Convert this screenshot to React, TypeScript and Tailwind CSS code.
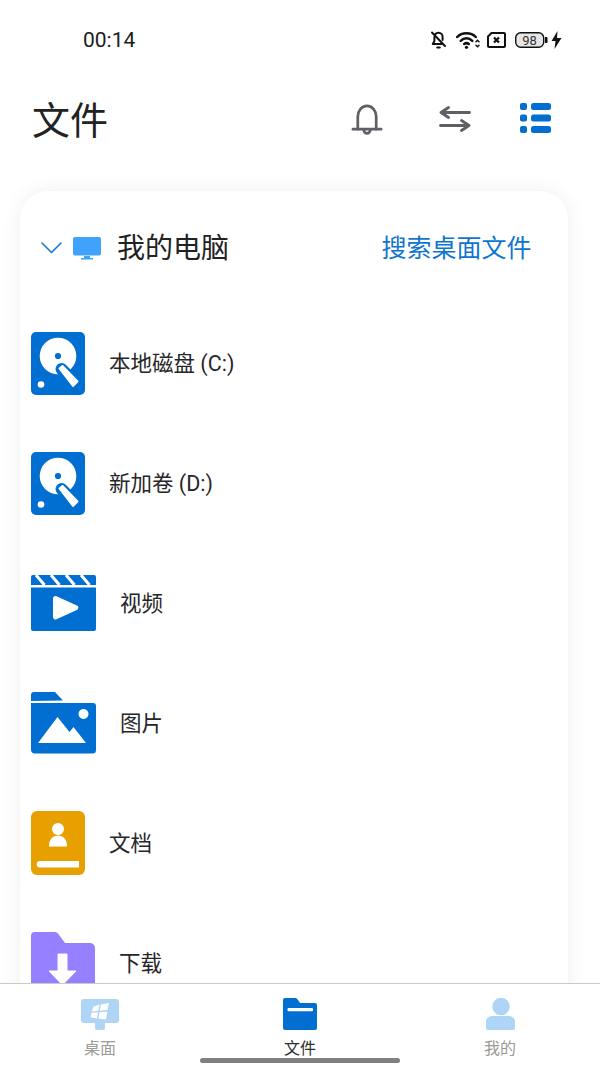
const BLUE = "#006fd1";

function DiskIcon() {
  return (
    <svg width="54" height="63" viewBox="0 0 54 63" className="shrink-0">
      <rect width="54" height="63" rx="5" fill={BLUE} />
      <circle cx="27" cy="24" r="18.300" fill="#fff" />
      <circle cx="27" cy="24" r="3.100" fill={BLUE} />
      <path d="M30.500 37L46 53" stroke={BLUE} strokeWidth="12" strokeLinecap="round" />
      <path d="M28.500 36.500L31.500 34L46.500 49.500L42 54Z" fill="#fff" stroke="#fff" strokeWidth="2" strokeLinejoin="round" />
      <circle cx="10" cy="52.500" r="3.300" fill="#fff" />
    </svg>
  );
}

function VideoIcon() {
  return (
    <svg width="65" height="56" viewBox="0 0 65 56" className="shrink-0">
      <path d="M2 0H63a2 2 0 0 1 2 2V10H0V2a2 2 0 0 1 2-2Z" fill={BLUE} />
      <path d="M5 0l8.500 10M20 0l8.500 10M35 0l8.500 10M50 0l8.500 10" stroke="#fff" strokeWidth="3" />
      <path d="M0 12.500H65V54a2 2 0 0 1-2 2H2a2 2 0 0 1-2-2Z" fill={BLUE} />
      <path d="M24.500 23.500L44.800 32.700L24.500 42Z" fill="#fff" stroke="#fff" strokeWidth="5" strokeLinejoin="round" />
    </svg>
  );
}

function ImageIcon() {
  return (
    <svg width="65" height="62" viewBox="0 0 65 62" className="shrink-0">
      <path d="M0 9V3a3 3 0 0 1 3-3H24l8 8.500Z" fill={BLUE} />
      <path d="M0 11H62a3 3 0 0 1 3 3V58a3.500 3.500 0 0 1-3.500 3.500H4A4 4 0 0 1 0 57.500Z" fill={BLUE} />
      <circle cx="52.500" cy="22" r="5" fill="#fff" />
      <path d="M7 51 L26.500 25 L38.500 40 L42.500 35 L55 51Z" fill="#fff" />
    </svg>
  );
}

function DocIcon() {
  return (
    <svg width="54" height="64" viewBox="0 0 54 64" className="shrink-0">
      <rect width="54" height="64" rx="6" fill="#e8a000" />
      <circle cx="27" cy="18" r="6" fill="#fff" />
      <path d="M18 35.500C18 28 22 24.500 27 24.500S36 28 36 35.500Z" fill="#fff" />
      <path d="M9 50H48V56.500H9a3.200 3.200 0 0 1 0-6.500Z" fill="#fff" />
    </svg>
  );
}

function DownloadIcon() {
  return (
    <svg width="64" height="62" viewBox="0 0 64 62" className="shrink-0">
      <path d="M0 58V4a4 4 0 0 1 4-4H24a4 4 0 0 1 3 1.500L34 11H59a5 5 0 0 1 5 5V58a4 4 0 0 1-4 4H4a4 4 0 0 1-4-4Z" fill="#9680ff" />
      <path d="M27 22H36V39H45L31.500 53 18 39H27Z" fill="#fff" stroke="#fff" strokeWidth="1" strokeLinejoin="round" />
    </svg>
  );
}

function FileRow({ icon, label }: { icon: React.ReactNode; label: string }) {
  return (
    <div className="flex h-[120px] items-center gap-6 pl-[11px]">
      {icon}
      <span className="pt-[2px] text-[21.5px] leading-none text-[#26262a]">{label}</span>
    </div>
  );
}

function NavItem({ icon, label, active }: { icon: React.ReactNode; label: string; active?: boolean }) {
  return (
    <div className="flex w-[200px] flex-col items-center">
      <div className="flex h-[32px] items-center justify-center">{icon}</div>
      <span className={`mt-[9px] text-[16px] leading-[20px] ${active ? "text-[#303030]" : "text-[#9a9a9a]"}`}>{label}</span>
    </div>
  );
}

export default function App() {
  return (
    <div
      className="relative flex h-[1067px] w-[600px] flex-col overflow-hidden bg-white"
      style={{ fontFamily: 'Roboto, "Noto Sans CJK SC", sans-serif' }}
    >
      {/* status bar */}
      <div className="flex h-[80px] shrink-0 items-center pl-[83px] pr-[38px]">
        <span className="text-[21px] leading-none text-[#1c1c1c]">00:14</span>
        <div className="ml-auto flex items-center">
          <svg width="15" height="18" viewBox="0 0 15 18" fill="none" stroke="#111" strokeWidth="2" strokeLinecap="round" strokeLinejoin="round">
            <path d="M4 3.500C5 2.300 6.200 1.700 7.500 1.700 10 1.700 11.600 3.600 11.600 6V9" />
            <path d="M3.400 6V10L1.800 13H10.500" />
            <path d="M1 1.500L14 15" />
            <path d="M6.300 16.500H8.700" strokeWidth="2.200" />
          </svg>
          <svg className="ml-[10px]" width="24" height="18" viewBox="0 0 24 18" fill="none" stroke="#111" strokeWidth="2.500" strokeLinecap="round">
            <path d="M1.200 6C6 1 15 1 19.800 6" />
            <path d="M4.700 9.800C8 6.500 13 6.500 16.300 9.800" />
            <path d="M8.200 13C9.500 12 11.500 12 12.800 13" />
            <circle cx="10.500" cy="16.300" r="1.600" fill="#111" stroke="none" />
            <path d="M20 10.700L21.500 9.200 23 10.700M20 14.300L21.500 15.800 23 14.300" strokeWidth="1.500" />
          </svg>
          <svg className="ml-[7px]" width="19" height="16" viewBox="0 0 19 16" fill="none">
            <path d="M4.500 1H17a1 1 0 0 1 1 1V14a1 1 0 0 1-1 1H2a1 1 0 0 1-1-1V4.500Z" stroke="#111" strokeWidth="2" strokeLinejoin="round" />
            <path d="M7 5.500L12 10.500M12 5.500L7 10.500" stroke="#111" strokeWidth="2.200" />
          </svg>
          <svg className="ml-[9px]" width="33" height="16" viewBox="0 0 33 16">
            <rect x="0.700" y="0.700" width="28" height="14.600" rx="5" fill="#e6e6e6" stroke="#111" strokeWidth="1.400" />
            <path d="M30 5h1.500a1 1 0 0 1 1 1v4a1 1 0 0 1-1 1H30Z" fill="#111" />
            <text x="14.600" y="12.500" textAnchor="middle" fontSize="13" fill="#333" fontFamily="Roboto, sans-serif">98</text>
          </svg>
          <svg className="ml-[3px]" width="11" height="18" viewBox="0 0 11 17" preserveAspectRatio="none">
            <path d="M6.500 0L0.500 9.500H4.500L3.500 17L10.500 6.500H6L6.500 0Z" fill="#111" />
          </svg>
        </div>
      </div>

      {/* title bar */}
      <div className="flex h-[80px] shrink-0 items-center pl-[32px]">
        <h1 className="pt-[2px] text-[38px] font-normal leading-none text-[#222]">文件</h1>
        <div className="ml-auto mb-[2px] flex items-center">
          <svg width="32" height="31" viewBox="0 0 32 32" fill="none" stroke="#5f6066" strokeWidth="2.800" strokeLinecap="round" strokeLinejoin="round">
            <path d="M6.500 26V13C6.500 7 10.500 2 16 2S25.500 7 25.500 13V26" />
            <path d="M1.500 26H30.500" />
            <path d="M12.500 26.500C13 29 14.500 30.300 16 30.300S19 29 19.500 26.500" />
          </svg>
          <svg className="ml-[56px]" width="32" height="26" viewBox="0 0 32 26" fill="none" stroke="#5f6066" strokeWidth="2.800" strokeLinecap="round" strokeLinejoin="round">
            <path d="M30.500 6.500H2M9.500 1.500L2 6.500L9.500 11.500" />
            <path d="M1.500 19.500H30M22.500 14.500L30 19.500L22.500 24.500" />
          </svg>
          <svg className="mb-[2px] ml-[49px] mr-[49px]" width="31" height="30" viewBox="0 0 31 30" fill={BLUE}>
            <rect x="0" y="0" width="7" height="7" rx="2" />
            <rect x="11" y="0" width="20" height="7" rx="2.500" />
            <rect x="0" y="11.500" width="7" height="7" rx="2" />
            <rect x="11" y="11.500" width="20" height="7" rx="2.500" />
            <rect x="0" y="23" width="7" height="7" rx="2" />
            <rect x="11" y="23" width="20" height="7" rx="2.500" />
          </svg>
        </div>
      </div>

      {/* card */}
      <div className="ml-[20px] mt-[31px] w-[548px] shrink-0 rounded-[28px] bg-white shadow-[0_0_20px_rgba(0,0,0,0.07)]">
        <div className="flex h-[112px] items-center pl-[21px] pr-[36.5px] pt-[2px]">
          <svg width="21" height="12" viewBox="0 0 21 12" fill="none" stroke="#1677d2" strokeWidth="1.600" strokeLinecap="round" strokeLinejoin="round">
            <path d="M1 1L10.500 10.500L20 1" />
          </svg>
          <svg className="ml-[11px]" width="28" height="23" viewBox="0 0 28 23">
            <rect width="28" height="18.500" rx="2" fill="#3fa3fb" />
            <path d="M11 19H17V21H20V22.500H8V21H11Z" fill="#3fa3fb" />
          </svg>
          <span className="ml-[16px] pt-[2px] text-[28px] leading-none text-[#222]">我的电脑</span>
          <span className="ml-auto text-[25px] leading-none text-[#0f75cf]">搜索桌面文件</span>
        </div>
        <FileRow icon={<DiskIcon />} label="本地磁盘 (C:)" />
        <FileRow icon={<DiskIcon />} label="新加卷 (D:)" />
        <FileRow icon={<VideoIcon />} label="视频" />
        <FileRow icon={<ImageIcon />} label="图片" />
        <FileRow icon={<DocIcon />} label="文档" />
        <FileRow icon={<DownloadIcon />} label="下载" />
      </div>

      {/* bottom navigation */}
      <div className="absolute bottom-0 left-0 flex h-[84px] w-[600px] justify-between border-t border-[#c9c9c9] bg-white pt-[14px]">
        <NavItem
          label="桌面"
          icon={
            <svg width="38" height="31" viewBox="0 0 38 31">
              <path d="M3 0H35a3 3 0 0 1 3 3V21a3 3 0 0 1-3 3H24V29a2 2 0 0 1-2 2H16a2 2 0 0 1-2-2V24H3a3 3 0 0 1-3-3V3a3 3 0 0 1 3-3Z" fill="#aed5f6" />
              <path d="M12.500 7.500L18.300 5.800L17.300 11.800L10.800 12.500ZM19.800 5.500L28 4L26.500 11L18.800 11.700ZM10.500 13.800L17 13.300L16 19.500L9.500 18.300ZM18.500 13.300L26.300 12.800L25 20.500L17.500 19.700Z" fill="#fff" />
            </svg>
          }
        />
        <NavItem
          active
          label="文件"
          icon={
            <svg width="34" height="32" viewBox="0 0 34 32">
              <path d="M0 2a2 2 0 0 1 2-2H12a3 3 0 0 1 2.500 1.300L17 5H32a2 2 0 0 1 2 2V30a2 2 0 0 1-2 2H2a2 2 0 0 1-2-2Z" fill={BLUE} />
              <rect x="4.500" y="10" width="25.500" height="3.300" rx="1" fill="#fff" />
            </svg>
          }
        />
        <NavItem
          label="我的"
          icon={
            <svg width="29" height="32" viewBox="0 0 29 32" fill="#aed5f6">
              <circle cx="15" cy="8.500" r="8.700" />
              <path d="M0 24C0 20 3 18 7 18H22C26 18 29 20 29 24V30a2 2 0 0 1-2 2H2a2 2 0 0 1-2-2Z" />
            </svg>
          }
        />
      </div>
      <div className="absolute bottom-[4px] left-[200px] h-[5px] w-[200px] rounded-full bg-[#808080]" />
    </div>
  );
}
